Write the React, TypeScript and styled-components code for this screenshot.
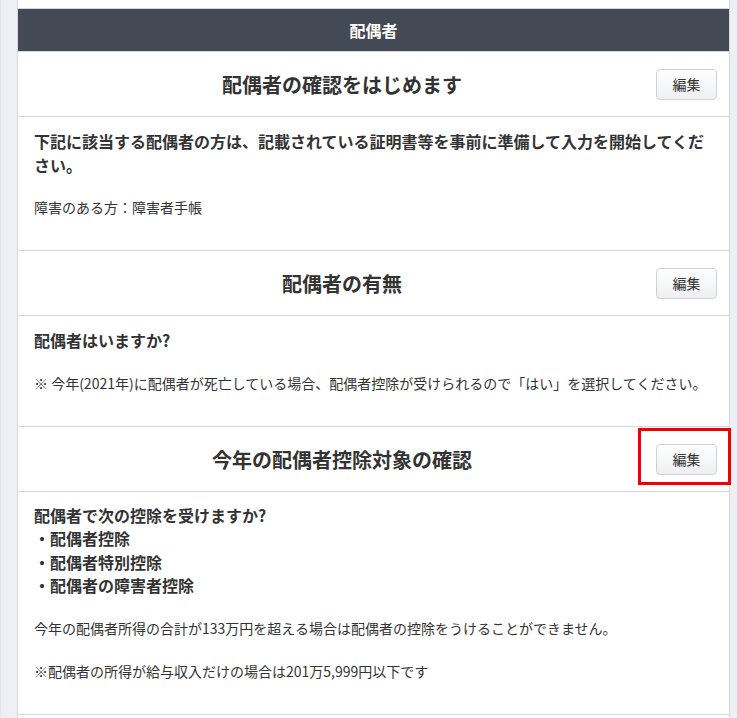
import styled, { createGlobalStyle } from "styled-components";

const GlobalStyle = createGlobalStyle`
  html, body {
    margin: 0;
    padding: 0;
    background: #eef0f5;
    font-family: "Noto Sans CJK JP", "Noto Sans", sans-serif;
    color: #333;
  }
`;

const Page = styled.div`
  min-height: 718px;
  padding-left: 16px;
  border-left: 1px solid #e3e5ea;
  box-sizing: border-box;
`;

const Card = styled.div`
  width: 713px;
  background: #fff;
  border-left: 1px solid #d5d7dc;
  border-right: 1px solid #d5d7dc;
  box-sizing: border-box;
`;

const TopSpacer = styled.div`
  height: 8px;
  border-bottom: 1px solid #d5d7dc;
`;

const CategoryBar = styled.div`
  height: 42px;
  display: flex;
  align-items: center;
  justify-content: center;
  background: #434955;
  color: #fff;
  font-size: 16px;
  font-weight: 700;
  border-bottom: 1px solid #d5d7dc;
`;

const Section = styled.section`
  border-bottom: 1px solid #d5d7dc;
`;

const SectionHead = styled.div`
  height: 64px;
  display: flex;
  align-items: center;
  gap: 6px;
  padding: 0 12px 0 16px;
  border-bottom: 1px solid #d5d7dc;
`;

const SectionTitle = styled.h2`
  flex: 1;
  margin: 0;
  text-align: center;
  font-size: 20px;
  font-weight: 700;
  color: #333;
`;

const EditWrap = styled.div`
  position: relative;
  display: flex;
`;

const EditButton = styled.button`
  width: 61px;
  height: 31px;
  padding: 0;
  border: 1px solid #cfd1d6;
  border-radius: 4px;
  background: linear-gradient(#ffffff, #eef0f2);
  font-family: inherit;
  font-size: 14px;
  color: #333;
  cursor: pointer;
`;

const Highlight = styled.span`
  position: absolute;
  top: -16px;
  left: -18px;
  right: -14px;
  bottom: -10px;
  border: 3px solid #f40000;
  pointer-events: none;
`;

const SectionBody = styled.div`
  padding: 12px 16px 32px;
`;

const Question = styled.div`
  font-size: 16px;
  font-weight: 700;
  line-height: 24px;
`;

const QuestionList = styled.div`
  font-size: 16px;
  font-weight: 700;
  line-height: 23.4px;
`;

const Note = styled.p<{ $gap?: number }>`
  margin: ${({ $gap }) => $gap ?? 20}px 0 0;
  font-size: 14px;
  line-height: 21px;
`;

const BottomSpacer = styled.div`
  height: 5px;
`;

type EditProps = { highlighted?: boolean };

const Edit = ({ highlighted }: EditProps) => (
  <EditWrap>
    <EditButton type="button">編集</EditButton>
    {highlighted && <Highlight />}
  </EditWrap>
);

export default function App() {
  return (
    <>
      <GlobalStyle />
      <Page>
        <Card>
          <TopSpacer />
          <CategoryBar>配偶者</CategoryBar>

          <Section>
            <SectionHead>
              <SectionTitle>配偶者の確認をはじめます</SectionTitle>
              <Edit />
            </SectionHead>
            <SectionBody>
              <Question>
                下記に該当する配偶者の方は、記載されている証明書等を事前に準備して入力を開始してください。
              </Question>
              <Note>障害のある方：障害者手帳</Note>
            </SectionBody>
          </Section>

          <Section>
            <SectionHead>
              <SectionTitle>配偶者の有無</SectionTitle>
              <Edit />
            </SectionHead>
            <SectionBody>
              <Question>配偶者はいますか?</Question>
              <Note $gap={21}>
                ※ 今年(2021年)に配偶者が死亡している場合、配偶者控除が受けられるので「はい」を選択してください。
              </Note>
            </SectionBody>
          </Section>

          <Section>
            <SectionHead>
              <SectionTitle>今年の配偶者控除対象の確認</SectionTitle>
              <Edit highlighted />
            </SectionHead>
            <SectionBody>
              <QuestionList>
                配偶者で次の控除を受けますか?
                <br />・配偶者控除
                <br />・配偶者特別控除
                <br />・配偶者の障害者控除
              </QuestionList>
              <Note>
                今年の配偶者所得の合計が133万円を超える場合は配偶者の控除をうけることができません。
              </Note>
              <Note $gap={22}>
                ※配偶者の所得が給与収入だけの場合は201万5,999円以下です
              </Note>
            </SectionBody>
          </Section>
          <BottomSpacer />
        </Card>
      </Page>
    </>
  );
}
